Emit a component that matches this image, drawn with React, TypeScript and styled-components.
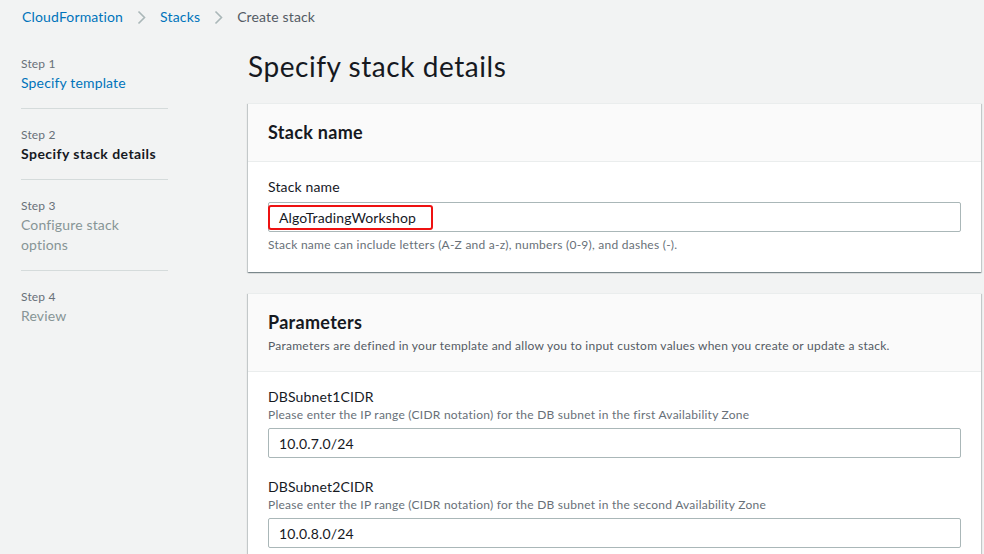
import styled, { createGlobalStyle } from "styled-components";

const GlobalStyle = createGlobalStyle`
  html, body {
    margin: 0;
    padding: 0;
    background: #f2f3f3;
  }
  body {
    font-family: Lato, "Open Sans", sans-serif;
    color: #16191f;
    letter-spacing: 0.15px;
  }
`;

const Page = styled.div`
  width: 984px;
  height: 554px;
  overflow: hidden;
  background: #f2f3f3;
`;

const Breadcrumbs = styled.nav`
  display: flex;
  align-items: center;
  height: 20px;
  padding: 7px 0 0 22px;
  font-size: 14px;
  line-height: 20px;
`;

const Crumb = styled.span<{ $current?: boolean }>`
  color: ${(p) => (p.$current ? "#545b64" : "#0073bb")};
`;

const Chevron = styled.svg`
  margin: 0 14px 0 14px;
  flex: none;
`;

const Layout = styled.div`
  display: flex;
  padding: 0 3px 0 21px;
  gap: 80px;
`;

const SideNav = styled.ol`
  list-style: none;
  margin: 0;
  padding: 18px 0 0;
  width: 147px;
  flex: none;
`;

const StepItem = styled.li`
  padding: 17px 0 15px;
  border-bottom: 1px solid #d5dbdb;
  &:first-child {
    padding-top: 10px;
  }
  &:last-child {
    border-bottom: none;
  }
`;

const StepLabel = styled.div`
  font-size: 12px;
  line-height: 18px;
  color: #687078;
`;

const StepTitle = styled.div<{ $state: "done" | "active" | "todo" }>`
  font-size: 14px;
  line-height: 20px;
  color: ${(p) =>
    p.$state === "done" ? "#0073bb" : p.$state === "active" ? "#16191f" : "#879596"};
  font-weight: ${(p) => (p.$state === "active" ? 700 : 400)};
  letter-spacing: ${(p) => (p.$state === "active" ? "0.45px" : "0.15px")};
`;

const Main = styled.main`
  flex: 1;
  min-width: 0;
`;

const PageTitle = styled.h1`
  margin: 21px 0 19px;
  font-size: 28px;
  line-height: 36px;
  font-weight: 400;
  letter-spacing: 0.55px;
  color: #16191f;
`;

const Panel = styled.section`
  background: #fff;
  border-top: 1px solid #eaeded;
  box-shadow: 0 1px 1px 0 rgba(0, 28, 36, 0.3), 1px 1px 1px 0 rgba(0, 28, 36, 0.15),
    -1px 1px 1px 0 rgba(0, 28, 36, 0.15);
  margin-bottom: 21px;
`;

const PanelHeader = styled.header`
  background: #fafafa;
  border-bottom: 1px solid #eaeded;
  padding: 16px 20px 17px;
`;

const PanelTitle = styled.h2`
  margin: 0;
  font-size: 18px;
  line-height: 24px;
  font-weight: 700;
  letter-spacing: 0.3px;
  color: #16191f;
`;

const PanelDescription = styled.p`
  margin: 4px 0 0;
  font-size: 12px;
  line-height: 16px;
  letter-spacing: 0.25px;
  color: #545b64;
`;

const PanelBody = styled.div`
  padding: 15px 20px 19px;
  display: flex;
  flex-direction: column;
  gap: 19px;
`;

const Field = styled.div`
  display: flex;
  flex-direction: column;
`;

const Label = styled.label`
  font-size: 14px;
  line-height: 20px;
  color: #16191f;
`;

const Description = styled.div`
  font-size: 12px;
  line-height: 16px;
  letter-spacing: 0.25px;
  color: #687078;
`;

const Input = styled.div`
  box-sizing: border-box;
  height: 30px;
  margin-top: 5px;
  border: 1px solid #aab7b8;
  border-radius: 2px;
  background: #fff;
  display: flex;
  align-items: center;
  padding: 0 10px;
  font-size: 14px;
  color: #16191f;
  position: relative;
`;

const Highlight = styled.span`
  position: absolute;
  left: -1px;
  top: 2px;
  width: 161px;
  height: 21px;
  border: 2px solid #ee1111;
  border-radius: 3px;
`;

const Hint = styled.div`
  margin-top: 5px;
  font-size: 12px;
  line-height: 16px;
  letter-spacing: 0.25px;
  color: #687078;
`;

function ChevronIcon() {
  return (
    <Chevron width="9" height="15" viewBox="0 0 9 15">
      <path d="M1.5 1.5 L7.5 7.5 L1.5 13.5" fill="none" stroke="#aab7b8" strokeWidth="1.6" />
    </Chevron>
  );
}

const steps = [
  { n: 1, title: "Specify template", state: "done" as const },
  { n: 2, title: "Specify stack details", state: "active" as const },
  { n: 3, title: "Configure stack options", state: "todo" as const },
  { n: 4, title: "Review", state: "todo" as const },
];

const params = [
  {
    name: "DBSubnet1CIDR",
    desc: "Please enter the IP range (CIDR notation) for the DB subnet in the first Availability Zone",
    value: "10.0.7.0/24",
  },
  {
    name: "DBSubnet2CIDR",
    desc: "Please enter the IP range (CIDR notation) for the DB subnet in the second Availability Zone",
    value: "10.0.8.0/24",
  },
];

export default function App() {
  return (
    <Page>
      <GlobalStyle />
      <Breadcrumbs>
        <Crumb>CloudFormation</Crumb>
        <ChevronIcon />
        <Crumb>Stacks</Crumb>
        <ChevronIcon />
        <Crumb $current>Create stack</Crumb>
      </Breadcrumbs>
      <Layout>
        <SideNav>
          {steps.map((s) => (
            <StepItem key={s.n}>
              <StepLabel>Step {s.n}</StepLabel>
              <StepTitle $state={s.state}>
                {s.n === 3 ? (
                  <>
                    Configure stack
                    <br />
                    options
                  </>
                ) : (
                  s.title
                )}
              </StepTitle>
            </StepItem>
          ))}
        </SideNav>
        <Main>
          <PageTitle>Specify stack details</PageTitle>
          <Panel>
            <PanelHeader>
              <PanelTitle>Stack name</PanelTitle>
            </PanelHeader>
            <PanelBody>
              <Field>
                <Label>Stack name</Label>
                <Input>
                  AlgoTradingWorkshop
                  <Highlight />
                </Input>
                <Hint>
                  Stack name can include letters (A-Z and a-z), numbers (0-9), and dashes (-).
                </Hint>
              </Field>
            </PanelBody>
          </Panel>
          <Panel>
            <PanelHeader>
              <PanelTitle>Parameters</PanelTitle>
              <PanelDescription>
                Parameters are defined in your template and allow you to input custom values when
                you create or update a stack.
              </PanelDescription>
            </PanelHeader>
            <PanelBody>
              {params.map((p) => (
                <Field key={p.name}>
                  <Label>{p.name}</Label>
                  <Description>{p.desc}</Description>
                  <Input>{p.value}</Input>
                </Field>
              ))}
            </PanelBody>
          </Panel>
        </Main>
      </Layout>
    </Page>
  );
}
